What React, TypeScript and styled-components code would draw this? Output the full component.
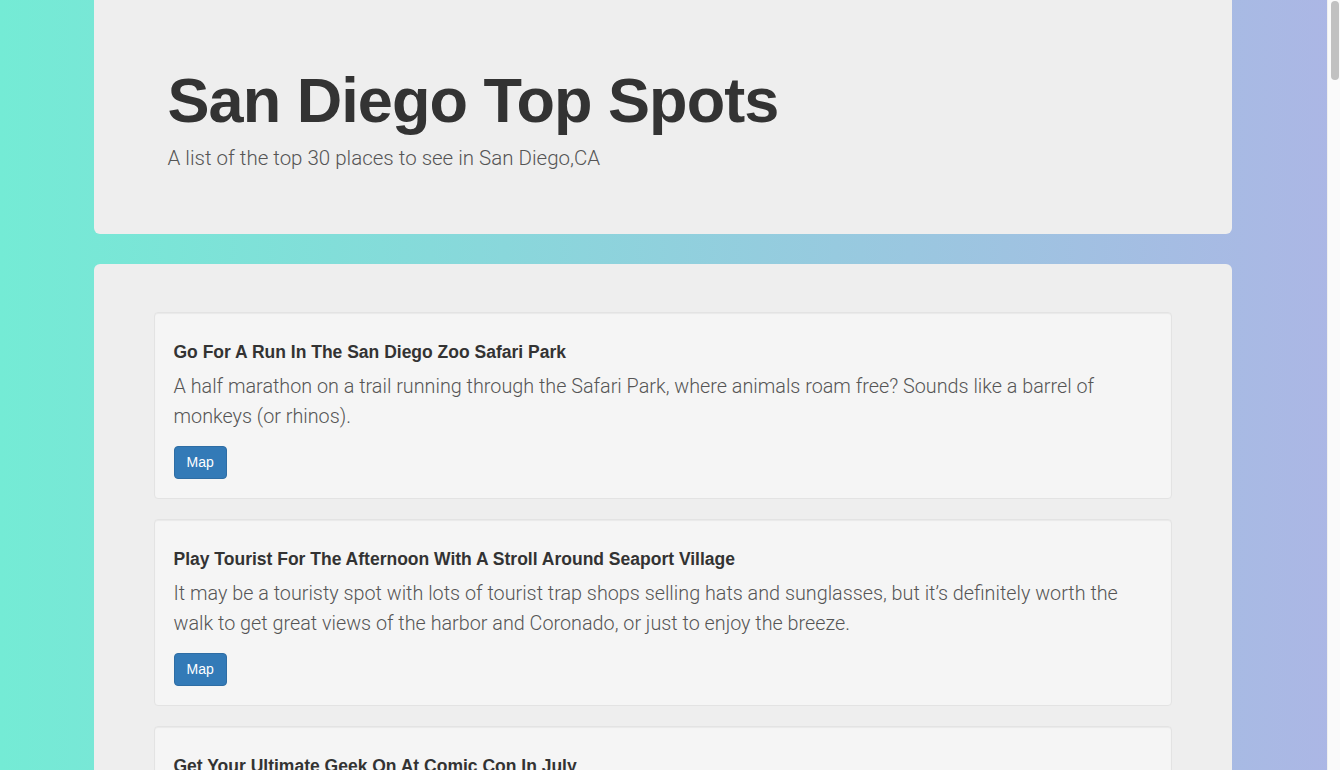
import React from "react";
import styled, { createGlobalStyle } from "styled-components";

const GlobalStyle = createGlobalStyle`
  html, body {
    margin: 0;
    padding: 0;
  }
  body {
    background: linear-gradient(to right, #74ebd5, #acb6e5);
    background-attachment: fixed;
    font-family: "Liberation Sans", Arial, sans-serif;
    color: #333;
  }
`;

const Page = styled.div`
  padding-right: 15px;
`;

const ScrollTrack = styled.div`
  position: fixed;
  top: 0;
  right: 0;
  bottom: 0;
  width: 13px;
  box-sizing: border-box;
  background: #fafafa;
  border-left: 1px solid #f0f0f0;
  display: flex;
  flex-direction: column;
`;

const ScrollThumb = styled.div`
  margin: 1px 1px 0 3px;
  height: 79px;
  border-radius: 4px;
  background: #c1c1c1;
`;

const Container = styled.div`
  width: 1168px;
  box-sizing: border-box;
  margin: 0 auto;
  padding: 0 15px;
`;

const Jumbotron = styled.header`
  background: #eeeeee;
  border-radius: 0 0 6px 6px;
  padding: 66px 74px 61px;
`;

const Title = styled.h1`
  margin: 0 0 9px;
  font-size: 63px;
  line-height: 1.1;
  font-weight: 700;
  letter-spacing: -0.95px;
  color: #333;
`;

const Subtitle = styled.p`
  margin: 0;
  font-family: "Roboto", "Liberation Sans", sans-serif;
  font-weight: 300;
  font-size: 20.5px;
  line-height: 1.4;
  color: #555;
`;

const Panel = styled.main`
  margin-top: 30px;
  background: #eeeeee;
  border-radius: 6px;
  padding: 48px 60px 28px;
`;

const Well = styled.article`
  background: #f5f5f5;
  border: 1px solid #e3e3e3;
  border-radius: 4px;
  box-shadow: inset 0 1px 1px rgba(0, 0, 0, 0.05);
  padding: 19px;
  margin-bottom: 20px;
`;

const SpotTitle = styled.h4`
  margin: 11px 0 10px;
  font-size: 17.5px;
  line-height: 1.1;
  font-weight: 700;
  color: #333;
`;

const SpotText = styled.p`
  margin: 0 0 14px;
  font-family: "Roboto", "Liberation Sans", sans-serif;
  font-weight: 300;
  font-size: 19.8px;
  line-height: 30px;
  color: #555;
`;

const MapButton = styled.a`
  display: inline-block;
  padding: 6px 12px;
  font-size: 14px;
  line-height: 19px;
  color: #fff;
  background: #337ab7;
  border: 1px solid #2e6da4;
  border-radius: 4px;
  text-decoration: none;
  cursor: pointer;
`;

type Spot = { name: string; description: string };

const spots: Spot[] = [
  {
    name: "Go For A Run In The San Diego Zoo Safari Park",
    description:
      "A half marathon on a trail running through the Safari Park, where animals roam free? Sounds like a barrel of monkeys (or rhinos).",
  },
  {
    name: "Play Tourist For The Afternoon With A Stroll Around Seaport Village",
    description:
      "It may be a touristy spot with lots of tourist trap shops selling hats and sunglasses, but it’s definitely worth the walk to get great views of the harbor and Coronado, or just to enjoy the breeze.",
  },
  {
    name: "Get Your Ultimate Geek On At Comic Con In July",
    description:
      "Every July the Gaslamp Quarter fills up with superheroes, wizards and aliens for the biggest comic and pop culture convention around.",
  },
  {
    name: "Watch The Sunset At Sunset Cliffs",
    description:
      "The name says it all. Grab a blanket and find a spot along the cliffs to watch the sun sink into the Pacific.",
  },
  {
    name: "Explore The Museums Of Balboa Park",
    description:
      "With more than fifteen museums, beautiful gardens and Spanish Revival architecture, you could spend days wandering around the park.",
  },
  {
    name: "Kayak The Sea Caves In La Jolla",
    description:
      "Paddle out to the seven sea caves of La Jolla Cove and keep an eye out for sea lions, leopard sharks and garibaldi.",
  },
  {
    name: "Ride The Giant Dipper At Belmont Park",
    description:
      "This historic wooden roller coaster has been thrilling riders in Mission Beach since 1925.",
  },
  {
    name: "Tour The USS Midway Museum",
    description:
      "Walk the flight deck of one of the longest serving aircraft carriers of the 20th century, right on the downtown waterfront.",
  },
  {
    name: "Eat Fish Tacos In Ocean Beach",
    description:
      "No trip to San Diego is complete without a fish taco, and OB has some of the best in town.",
  },
  {
    name: "Hike Torrey Pines State Natural Reserve",
    description:
      "Trails wind through rare Torrey pine trees and end at sweeping views of the ocean and the beach below.",
  },
  {
    name: "Spend A Day At Coronado Beach",
    description:
      "Sparkling sand, gentle waves and the iconic Hotel del Coronado make this one of the best beaches in the country.",
  },
  {
    name: "Wander Through Old Town San Diego",
    description:
      "Step back in time at the birthplace of California, with historic buildings, shops and plenty of Mexican food.",
  },
  {
    name: "See The Seals At The Children’s Pool",
    description:
      "Harbor seals lounge on the sand just steps from the sidewalk in La Jolla. Look, but don’t touch!",
  },
  {
    name: "Catch A Padres Game At Petco Park",
    description:
      "Even if you’re not a baseball fan, the ballpark is a great place to spend a sunny afternoon downtown.",
  },
  {
    name: "Visit Cabrillo National Monument",
    description:
      "Check out the old lighthouse, explore the tide pools and watch for migrating gray whales in winter.",
  },
  {
    name: "Go Bar Hopping In The Gaslamp Quarter",
    description:
      "Sixteen blocks of restaurants, bars and clubs make this the heart of San Diego’s nightlife.",
  },
  {
    name: "Shop The Little Italy Mercato",
    description:
      "Every Saturday the streets of Little Italy fill up with farmers, flowers and food vendors.",
  },
  {
    name: "Take The Ferry To Coronado",
    description:
      "A short and scenic ride across the bay with great views of the downtown skyline.",
  },
  {
    name: "Visit The World Famous San Diego Zoo",
    description:
      "Home to more than 3,500 animals, the zoo is one of the most popular attractions in the city.",
  },
  {
    name: "Walk The Boardwalk In Mission Beach",
    description:
      "Rent a bike or a pair of skates and cruise along the boardwalk with the ocean at your side.",
  },
  {
    name: "Sample Craft Beer In North Park",
    description:
      "San Diego is known as the craft beer capital of America, and North Park is full of great breweries.",
  },
  {
    name: "Watch The Surfers At Windansea Beach",
    description:
      "One of the most famous surf spots in Southern California, with a historic palm shack on the sand.",
  },
  {
    name: "Go Whale Watching",
    description:
      "From December through April, gray whales pass right by the coast on their way to Baja.",
  },
  {
    name: "Explore Liberty Station",
    description:
      "A former naval training center turned into a home for art galleries, restaurants and a public market.",
  },
  {
    name: "Stroll Through The Botanic Building In Balboa Park",
    description:
      "One of the largest lath structures in the world, filled with more than 2,100 permanent plants.",
  },
  {
    name: "Picnic At Mount Soledad",
    description:
      "The top of the hill offers 360 degree views of La Jolla, the coast and the city.",
  },
  {
    name: "Take A Day Trip To Julian",
    description:
      "Head into the mountains for apple pie, old mining history and maybe even a little snow.",
  },
  {
    name: "See The Flower Fields In Carlsbad",
    description:
      "Each spring fifty acres of giant ranunculus flowers bloom in a rainbow of color.",
  },
  {
    name: "Bike Around Mission Bay",
    description:
      "Miles of flat paths wind around the bay past parks, beaches and picnic spots.",
  },
  {
    name: "Relax At Del Mar Beach",
    description:
      "A laid back beach town just north of the city, perfect for a quiet afternoon in the sun.",
  },
];

export default function App() {
  return (
    <>
      <GlobalStyle />
      <Page>
        <Container>
          <Jumbotron>
            <Title>San Diego Top Spots</Title>
            <Subtitle>A list of the top 30 places to see in San Diego,CA</Subtitle>
          </Jumbotron>
          <Panel>
            {spots.map((spot) => (
              <Well key={spot.name}>
                <SpotTitle>{spot.name}</SpotTitle>
                <SpotText>{spot.description}</SpotText>
                <MapButton>Map</MapButton>
              </Well>
            ))}
          </Panel>
        </Container>
      </Page>
      <ScrollTrack aria-hidden="true">
        <ScrollThumb />
      </ScrollTrack>
    </>
  );
}
